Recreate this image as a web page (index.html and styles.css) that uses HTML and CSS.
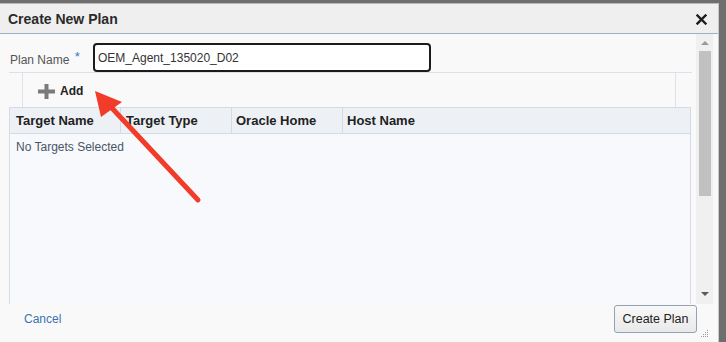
FILE: index.html
```html
<!DOCTYPE html>
<html>
<head>
<meta charset="utf-8">
<link rel="stylesheet" href="styles.css">
</head>
<body>
<div class="dialog">
  <div class="titlebar">
    <span class="title">Create New Plan</span>
    <svg class="close" width="11" height="11" viewBox="0 0 11 11"><path d="M1.5 1.5 L9.5 9.5 M9.5 1.5 L1.5 9.5" stroke="#1e1e1e" stroke-width="2.4" stroke-linecap="square"/></svg>
  </div>
  <div class="main">
    <div class="content">
      <div class="form-row">
        <label class="label">Plan Name <span class="req">*</span></label>
        <div class="input">OEM_Agent_135020_D02</div>
      </div>
      <div class="toolbar">
        <div class="toolbox">
          <span class="add">
            <svg class="plus" width="17" height="15" viewBox="0 0 17 15"><rect x="0" y="5.5" width="17" height="4" fill="#7a7a7a"/><rect x="6.5" y="0" width="4" height="15" fill="#7a7a7a"/></svg>
            <span class="add-text">Add</span>
          </span>
        </div>
      </div>
      <div class="table">
        <div class="thead">
          <div class="th c1">Target Name</div>
          <div class="th c2">Target Type</div>
          <div class="th c3">Oracle Home</div>
          <div class="th c4">Host Name</div>
        </div>
        <div class="tbody">
          <div class="empty">No Targets Selected</div>
        </div>
      </div>
    </div>
    <div class="scrollbar">
      <div class="arrow-up"></div>
      <div class="thumb"></div>
      <div class="spacer"></div>
      <div class="arrow-down"></div>
    </div>
  </div>
  <div class="footer">
    <a class="cancel">Cancel</a>
    <button class="create">Create Plan</button>
    <svg class="grip" width="8" height="8" viewBox="0 0 8 8">
      <rect x="6" y="0" width="1" height="1" fill="#999"/>
      <rect x="4" y="2" width="1" height="1" fill="#999"/><rect x="6" y="2" width="1" height="1" fill="#999"/>
      <rect x="2" y="4" width="1" height="1" fill="#999"/><rect x="4" y="4" width="1" height="1" fill="#999"/><rect x="6" y="4" width="1" height="1" fill="#999"/>
      <rect x="0" y="6" width="1" height="1" fill="#999"/><rect x="2" y="6" width="1" height="1" fill="#999"/><rect x="4" y="6" width="1" height="1" fill="#999"/><rect x="6" y="6" width="1" height="1" fill="#999"/>
    </svg>
  </div>
</div>
<svg class="annot" width="726" height="342" viewBox="0 0 726 342">
  <line x1="198" y1="200" x2="110" y2="106" stroke="#f23b28" stroke-width="5" stroke-linecap="round"/>
  <polygon points="95,91 122,102 101,117" fill="#f23b28"/>
</svg>
</body>
</html>
```
FILE: styles.css
```css
html, body {
  margin: 0;
  padding: 0;
}
body {
  width: 726px;
  height: 342px;
  overflow: hidden;
  background: #6e6e6e;
  font-family: "Liberation Sans", Arial, sans-serif;
  position: relative;
}
.dialog {
  margin-top: 3px;
  width: 719px;
  height: 339px;
  border-top: 1px solid #b9b9b9;
  border-right: 1px solid #c9c9c9;
  background: #f9f9f9;
  display: flex;
  flex-direction: column;
  box-sizing: border-box;
}
.titlebar {
  height: 30px;
  flex: none;
  box-sizing: border-box;
  background: #efefef;
  border-bottom: 1px solid #9db1c4;
  display: flex;
  align-items: center;
  justify-content: space-between;
  padding: 0 11px 0 8px;
}
.title {
  font-size: 14px;
  font-weight: bold;
  color: #2b2b2b;
  padding-top: 1px;
}
.close {
  display: block;
  margin-top: 1px;
}
.main {
  height: 270px;
  flex: none;
  display: flex;
}
.content {
  width: 683px;
  margin-left: 9px;
  display: flex;
  flex-direction: column;
}
.form-row {
  height: 38px;
  box-sizing: border-box;
  padding-top: 9px;
  display: flex;
  align-items: flex-start;
}
.label {
  width: 83px;
  margin-left: 1px;
  font-size: 12px;
  color: #555;
  line-height: 29px;
  padding-top: 2px;
}
.req {
  color: #2f7bc4;
  font-size: 13px;
  position: relative;
  top: -3px;
  margin-left: 2px;
}
.input {
  width: 338px;
  height: 29px;
  box-sizing: border-box;
  border: 2px solid #1c1c1c;
  border-radius: 4px;
  background: #fff;
  font-size: 12px;
  color: #333;
  line-height: 26px;
  padding-left: 3px;
}
.toolbar {
  height: 35px;
  box-sizing: border-box;
  border-top: 1px solid #dbe2ea;
  display: flex;
}
.toolbox {
  margin-left: 13px;
  width: 654px;
  height: 34px;
  box-sizing: border-box;
  border-left: 1px solid #dde3ea;
  border-right: 1px solid #dde3ea;
  display: flex;
  align-items: center;
  padding-left: 15px;
  padding-top: 2px;
}
.add {
  display: flex;
  align-items: center;
  gap: 5px;
}
.plus {
  display: block;
}
.add-text {
  font-size: 12px;
  font-weight: bold;
  color: #222;
}
.table {
  width: 682px;
  flex: 1;
  display: flex;
  flex-direction: column;
}
.thead {
  height: 27px;
  box-sizing: border-box;
  display: flex;
  background: #edf1f5;
  border: 1px solid #d3dce6;
}
.th {
  box-sizing: border-box;
  font-size: 13px;
  font-weight: bold;
  color: #222;
  line-height: 26px;
  padding-left: 6px;
  border-right: 1px solid #d3dce6;
}
.c1 { width: 111px; }
.c2 { width: 111px; padding-left: 5px; }
.c3 { width: 111px; padding-left: 4px; }
.c4 { flex: 1; border-right: none; padding-left: 4px; }
.tbody {
  flex: 1;
  background: #f7f9fc;
  border-left: 1px solid #d6dde5;
  border-right: 1px solid #d6dde5;
  width: 682px;
  box-sizing: border-box;
}
.empty {
  font-size: 12px;
  color: #4a5566;
  padding: 6px 0 0 6px;
}
.scrollbar {
  margin-left: 4px;
  width: 17px;
  background: #f0f0f0;
  display: flex;
  flex-direction: column;
  align-items: center;
}
.arrow-up {
  margin-top: 7px;
  width: 0;
  height: 0;
  border-left: 4px solid transparent;
  border-right: 4px solid transparent;
  border-bottom: 4px solid #9a9a9a;
}
.thumb {
  margin-top: 6px;
  width: 12px;
  height: 145px;
  background: #c1c1c1;
}
.spacer {
  flex: 1;
}
.arrow-down {
  margin-bottom: 8px;
  width: 0;
  height: 0;
  border-left: 4px solid transparent;
  border-right: 4px solid transparent;
  border-top: 4px solid #5a5a5a;
}
.footer {
  flex: 1;
  display: flex;
  align-items: flex-start;
  position: relative;
  background: #f9f9f9;
}
.cancel {
  margin: 8px 0 0 24px;
  font-size: 12px;
  color: #3a74b0;
}
.create {
  margin: 1px 0 0 auto;
  margin-right: 21px;
  width: 83px;
  height: 28px;
  box-sizing: border-box;
  border: 1px solid #93a2b2;
  border-radius: 3px;
  background: linear-gradient(#f8f8f8, #e9e9e9);
  font-family: "Liberation Sans", Arial, sans-serif;
  font-size: 12.5px;
  color: #222;
  padding: 0;
}
.grip {
  position: absolute;
  right: 9px;
  bottom: 4px;
}
.annot {
  position: absolute;
  left: 0;
  top: 0;
  pointer-events: none;
}
```
